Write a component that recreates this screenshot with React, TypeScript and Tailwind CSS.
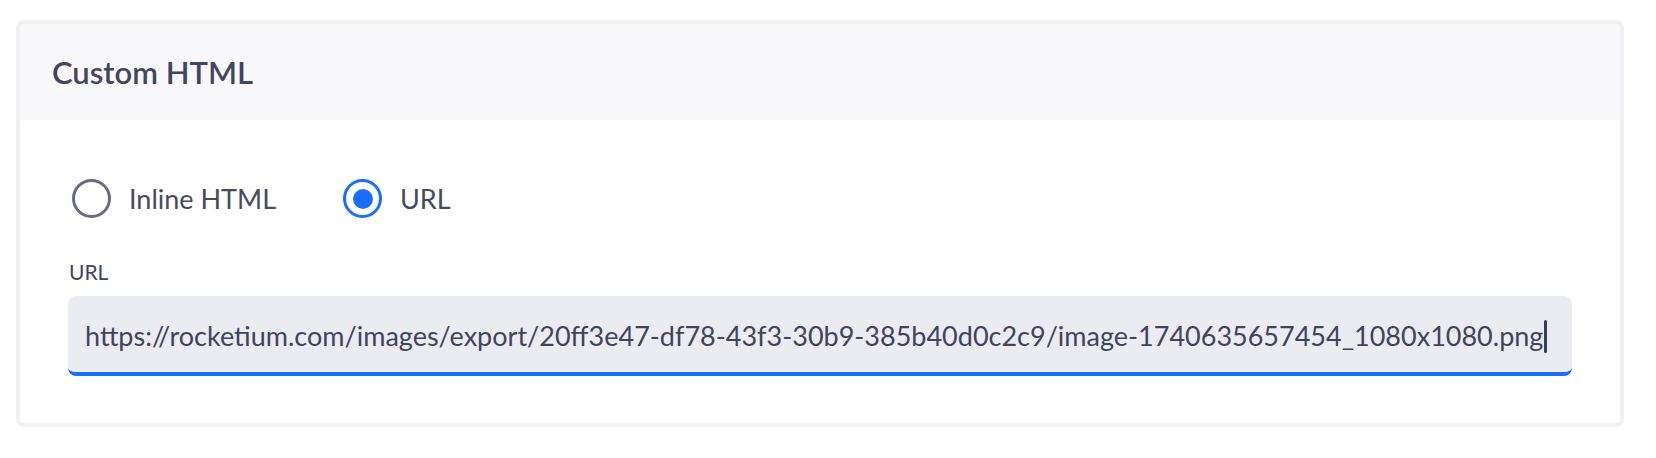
import { useState } from "react";

const URL_VALUE =
  "https://rocketium.com/images/export/20ff3e47-df78-43f3-30b9-385b40d0c2c9/image-1740635657454_1080x1080.png";

function Radio({ label, checked, onClick }: { label: string; checked: boolean; onClick: () => void }) {
  return (
    <button onClick={onClick} className="flex items-center gap-[18px] select-none">
      <span
        className={`w-[39px] h-[39px] rounded-full border-[3px] flex items-center justify-center ${
          checked ? "border-[#1a6dff]" : "border-[#676b8a]"
        }`}
      >
        {checked && <span className="w-5 h-5 rounded-full bg-[#1a6dff]" />}
      </span>
      <span className="text-[27px] leading-none text-[#464962]">{label}</span>
    </button>
  );
}

export default function App() {
  const [mode, setMode] = useState<"inline" | "url">("url");

  return (
    <div className="min-h-screen bg-white pt-5 pl-4 font-['Lato',sans-serif] text-[#41435e]">
      <div className="w-[1608px] h-[407px] border-4 border-[#eef0f4] rounded-lg overflow-hidden">
        <div className="h-24 bg-[#f8f8fa] flex items-center px-8">
          <h2 className="text-[31px] font-semibold text-[#42455f]">Custom HTML</h2>
        </div>

        <div className="px-12 pt-[59px]">
          <div className="flex items-center h-[39px] pl-1 gap-[67px]">
            <Radio label="Inline HTML" checked={mode === "inline"} onClick={() => setMode("inline")} />
            <Radio label="URL" checked={mode === "url"} onClick={() => setMode("url")} />
          </div>

          <div className="mt-[41px] h-[25px] text-[21px] leading-[25px] pl-px">URL</div>

          <div className="mt-3 h-20 bg-[#ebecf1] rounded-lg border-b-4 border-[#1a6dff] flex items-center px-[17px] pt-1">
            <span className="text-[27px] text-[#41435e] whitespace-nowrap">{URL_VALUE}</span>
            <span className="ml-px w-[3px] h-[33px] bg-[#3a3d5a] rounded-sm" />
          </div>
        </div>
      </div>
    </div>
  );
}
